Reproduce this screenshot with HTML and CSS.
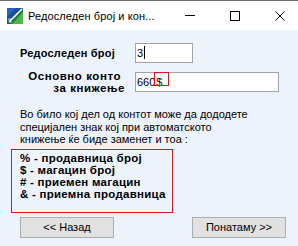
FILE: index.html
```html
<!DOCTYPE html>
<html lang="mk">
<head>
  <meta charset="UTF-8" />
  <title>Редоследен број и конто</title>
  <link rel="stylesheet" href="styles.css">
</head>
<body>

<div class="window">
  <div class="titlebar">
    <svg class="app-icon" width="16" height="16" viewBox="0 0 16 16">
      <rect x="0" y="0" width="16" height="16" fill="#1f7a3a"/>
      <polygon points="0,0 16,0 0,16" fill="#1a4f9c"/>
      <polygon points="0,0 9,0 0,9" fill="#2a66b8"/>
      <polygon points="16,4 16,16 5,16" fill="#4fb848"/>
      <path d="M2 14 L15 1" stroke="#ffffff" stroke-width="1.6"/>
      <path d="M1 11 L5 13 M3 10 L4 15" stroke="#dfeeff" stroke-width="0.8"/>
    </svg>
    <span class="title">Редоследен број и кон...</span>
    <div class="caption-buttons">
      <span class="cap-btn"><span class="cap-min"></span></span>
      <span class="cap-btn"><span class="cap-max"></span></span>
      <span class="cap-btn">
        <svg width="10" height="10" viewBox="0 0 10 10"><path d="M0.5 0.5 L9.5 9.5 M9.5 0.5 L0.5 9.5" stroke="#000" stroke-width="1"/></svg>
      </span>
    </div>
  </div>

  <div class="content">
    <div class="row row-first">
      <label class="lbl lbl-left">Редоследен број</label>
      <div class="field field-short">3<span class="caret"></span></div>
    </div>
    <div class="row row-second">
      <label class="lbl lbl-right"><span class="l1">Основно конто</span><span>за книжење</span></label>
      <div class="field field-long">660<span class="sym">$<span class="mark"></span></span></div>
    </div>

    <p class="note">Во било кој дел од контот може да дододете<br>специјален знак кој при автоматското<br>книжење ќе биде заменет и тоа :</p>

    <div class="legend">
      <div>% - продавница број</div>
      <div>$ - магацин број</div>
      <div># - приемен магацин</div>
      <div>&amp; - приемна продавница</div>
    </div>

    <div class="buttons">
      <button class="btn">&lt;&lt; Назад</button>
      <button class="btn">Понатаму &gt;&gt;</button>
    </div>
  </div>
</div>

</body>
</html>
```

FILE: styles.css
```css
body {
  margin: 0;
  width: 298px;
  height: 246px;
  overflow: hidden;
  font-family: 'Liberation Sans', Arial, sans-serif;
  font-size: 11px;
  color: #000;
}

.window {
  height: 246px;
  border-top: 1px solid #6a6a6a;
  background: #edf3fd;
  box-sizing: border-box;
}

.titlebar {
  height: 29px;
  background: #ffffff;
  display: flex;
  align-items: center;
  overflow: hidden;
}

.app-icon {
  margin-left: 7px;
  flex-shrink: 0;
}

.title {
  margin-left: 5px;
  font-size: 11px;
  letter-spacing: 0.1px;
  white-space: nowrap;
  flex-shrink: 0;
}

.caption-buttons {
  display: flex;
  margin-left: auto;
  margin-right: -4px;
}

.cap-btn {
  width: 45px;
  height: 29px;
  display: flex;
  align-items: center;
  justify-content: center;
}

.cap-min {
  width: 10px;
  height: 1px;
  background: #000;
}

.cap-max {
  width: 8px;
  height: 8px;
  border: 1px solid #000;
}

.content {
  padding-top: 13px;
}

.row {
  display: flex;
  align-items: center;
}

.row-first {
  height: 20px;
  margin-bottom: 9px;
}

.row-second {
  height: 20px;
}

.lbl {
  width: 125px;
  font-weight: bold;
  box-sizing: border-box;
}

.lbl-left {
  padding-left: 20px;
  letter-spacing: 0.2px;
}

.lbl-right {
  display: flex;
  flex-direction: column;
  align-items: flex-end;
  font-size: 11.5px;
  letter-spacing: 0.55px;
  line-height: 12px;
  margin-top: -1px;
}

.lbl-right .l1 {
  margin-right: 4px;
}

.field {
  position: relative;
  margin-left: 10px;
  height: 20px;
  box-sizing: border-box;
  border: 1px solid #a3a3a3;
  background: #fff;
  padding: 2px 0 0 1px;
  line-height: 14px;
}

.field-short {
  width: 58px;
}

.field-long {
  width: 144px;
}

.caret {
  display: inline-block;
  width: 1px;
  height: 13px;
  background: #000;
  vertical-align: top;
  margin-left: 1px;
}

.sym {
  position: relative;
  margin-left: 1px;
}

.mark {
  position: absolute;
  left: -2px;
  top: -4px;
  width: 15px;
  height: 14px;
  border: 1px solid #e8111b;
  box-sizing: border-box;
}

.note {
  margin: 16px 0 0 20px;
  line-height: 12.5px;
}

.legend {
  margin: 3px 0 0 11px;
  width: 162px;
  height: 64px;
  box-sizing: border-box;
  border: 1px solid #e8111b;
  padding: 2px 0 0 8px;
  font-size: 11.5px;
  letter-spacing: 0.25px;
  font-weight: bold;
  line-height: 12.2px;
}

.buttons {
  display: flex;
  justify-content: space-between;
  padding: 0 12px 0 20px;
  margin-top: 4px;
}

.btn {
  width: 94px;
  height: 21px;
  background: #e1e1e1;
  border: 1px solid #adadad;
  font-family: 'Liberation Sans', Arial, sans-serif;
  font-size: 11px;
  color: #000;
  padding: 0;
}
```
